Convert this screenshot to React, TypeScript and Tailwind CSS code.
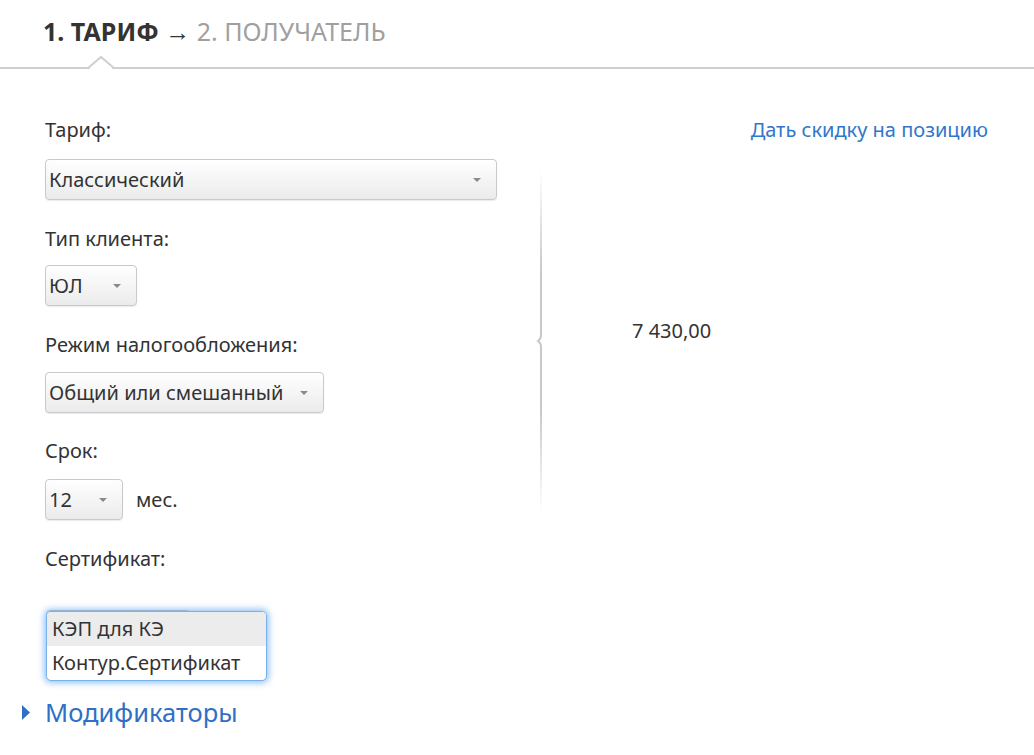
import React from "react";

const font = { fontFamily: '"Noto Sans", "Open Sans", sans-serif' };

function Arrow() {
  return (
    <svg width="10" height="6" viewBox="0 0 10 6" className="shrink-0">
      <path d="M1 1 L9 1 L5 5 Z" fill="#8a8a8a" />
    </svg>
  );
}

function Select({ value, width }: { value: string; width: string }) {
  return (
    <div
      className={`flex h-[41px] items-center justify-between rounded-[4px] border border-[#c9c9c9] bg-gradient-to-b from-white to-[#ebebeb] pl-[3px] pr-[14px] shadow-[0_1px_1px_rgba(0,0,0,0.08)] ${width}`}
    >
      <span className="text-[20px] text-[#333]">{value}</span>
      <Arrow />
    </div>
  );
}

function Label({ children }: { children: React.ReactNode }) {
  return <div className="h-6 text-[20px] leading-6 text-[#333]">{children}</div>;
}

function Brace() {
  return (
    <svg width="12" height="342" viewBox="0 0 12 342">
      <defs>
        <linearGradient id="fade" x1="0" y1="0" x2="0" y2="1">
          <stop offset="0" stopColor="#c8c8c8" stopOpacity="0" />
          <stop offset="0.3" stopColor="#c8c8c8" stopOpacity="1" />
          <stop offset="0.7" stopColor="#c8c8c8" stopOpacity="1" />
          <stop offset="1" stopColor="#c8c8c8" stopOpacity="0" />
        </linearGradient>
      </defs>
      <path
        d="M7 0 L7 165 Q7 169 4 171 Q7 173 7 177 L7 342"
        fill="none"
        stroke="url(#fade)"
        strokeWidth="2"
      />
    </svg>
  );
}

export default function App() {
  return (
    <div className="min-h-[755px] w-[1034px] bg-white" style={font}>
      <div className="relative h-[69px] border-b-2 border-[#cfcfcf]">
        <div className="pl-[43px] pt-[15px] text-[25px] leading-8">
          <span className="font-bold text-[#333]">1. ТАРИФ</span>
          <span className="text-[#333]"> → </span>
          <span className="text-[#a0a0a0]">2. ПОЛУЧАТЕЛЬ</span>
        </div>
        <svg
          width="26"
          height="14"
          viewBox="0 0 26 14"
          className="absolute left-[88px] top-[56px]"
        >
          <path d="M0 12 L13 1 L26 12" fill="white" stroke="#cfcfcf" strokeWidth="2" />
          <rect x="2" y="12" width="22" height="2" fill="white" />
        </svg>
      </div>

      <div className="flex pl-[45px] pr-[46px] pt-[49px]">
        <div className="w-[480px]">
          <Label>Тариф:</Label>
          <div className="mt-[17px]">
            <Select value="Классический" width="w-[452px]" />
          </div>
          <div className="mt-[27px]">
            <Label>Тип клиента:</Label>
          </div>
          <div className="mt-[14px]">
            <Select value="ЮЛ" width="w-[92px]" />
          </div>
          <div className="mt-[27px]">
            <Label>Режим налогообложения:</Label>
          </div>
          <div className="mt-[15px]">
            <Select value="Общий или смешанный" width="w-[279px]" />
          </div>
          <div className="mt-[26px]">
            <Label>Срок:</Label>
          </div>
          <div className="mt-[16px] flex items-center gap-[13px]">
            <Select value="12" width="w-[78px]" />
            <span className="text-[20px] text-[#333]">мес.</span>
          </div>
          <div className="mt-[27px]">
            <Label>Сертификат:</Label>
          </div>
          <div className="relative mt-[40px] h-[71px]">
            <div className="absolute left-[1px] top-[-1px] h-[40px] w-[145px] rounded-[4px] border border-[#c9c9c9] bg-white" />
            <div className="absolute left-[1px] top-0 w-[221px] overflow-hidden rounded-[5px] border border-[#78b0ec] bg-white shadow-[0_0_6px_2px_rgba(80,155,235,0.6)]">
              <div className="flex h-[34px] items-center bg-[#ececec] pl-[5px] text-[20px] text-[#333]">
                КЭП для КЭ
              </div>
              <div className="flex h-[34px] items-center pl-[5px] text-[20px] text-[#333]">
                Контур.Сертификат
              </div>
            </div>
          </div>
        </div>

        <div className="flex-1">
          <div className="flex h-6 justify-end text-[20px] leading-6 text-[#3276c8]">
            Дать скидку на позицию
          </div>
          <div className="mt-[28px] flex">
            <div className="ml-[9px]">
              <Brace />
            </div>
            <div className="ml-[86px] mt-[149px] text-[20px] leading-6 text-[#333]">7 430,00</div>
          </div>
        </div>
      </div>

      <div className="mt-[14px] flex items-center pl-[22px]">
        <svg width="9" height="15" viewBox="0 0 9 15">
          <path d="M0 0 L8 7.5 L0 15 Z" fill="#2f6fc6" />
        </svg>
        <span className="ml-[14px] text-[25.5px] leading-8 text-[#2f6fc6]">Модификаторы</span>
      </div>
    </div>
  );
}
